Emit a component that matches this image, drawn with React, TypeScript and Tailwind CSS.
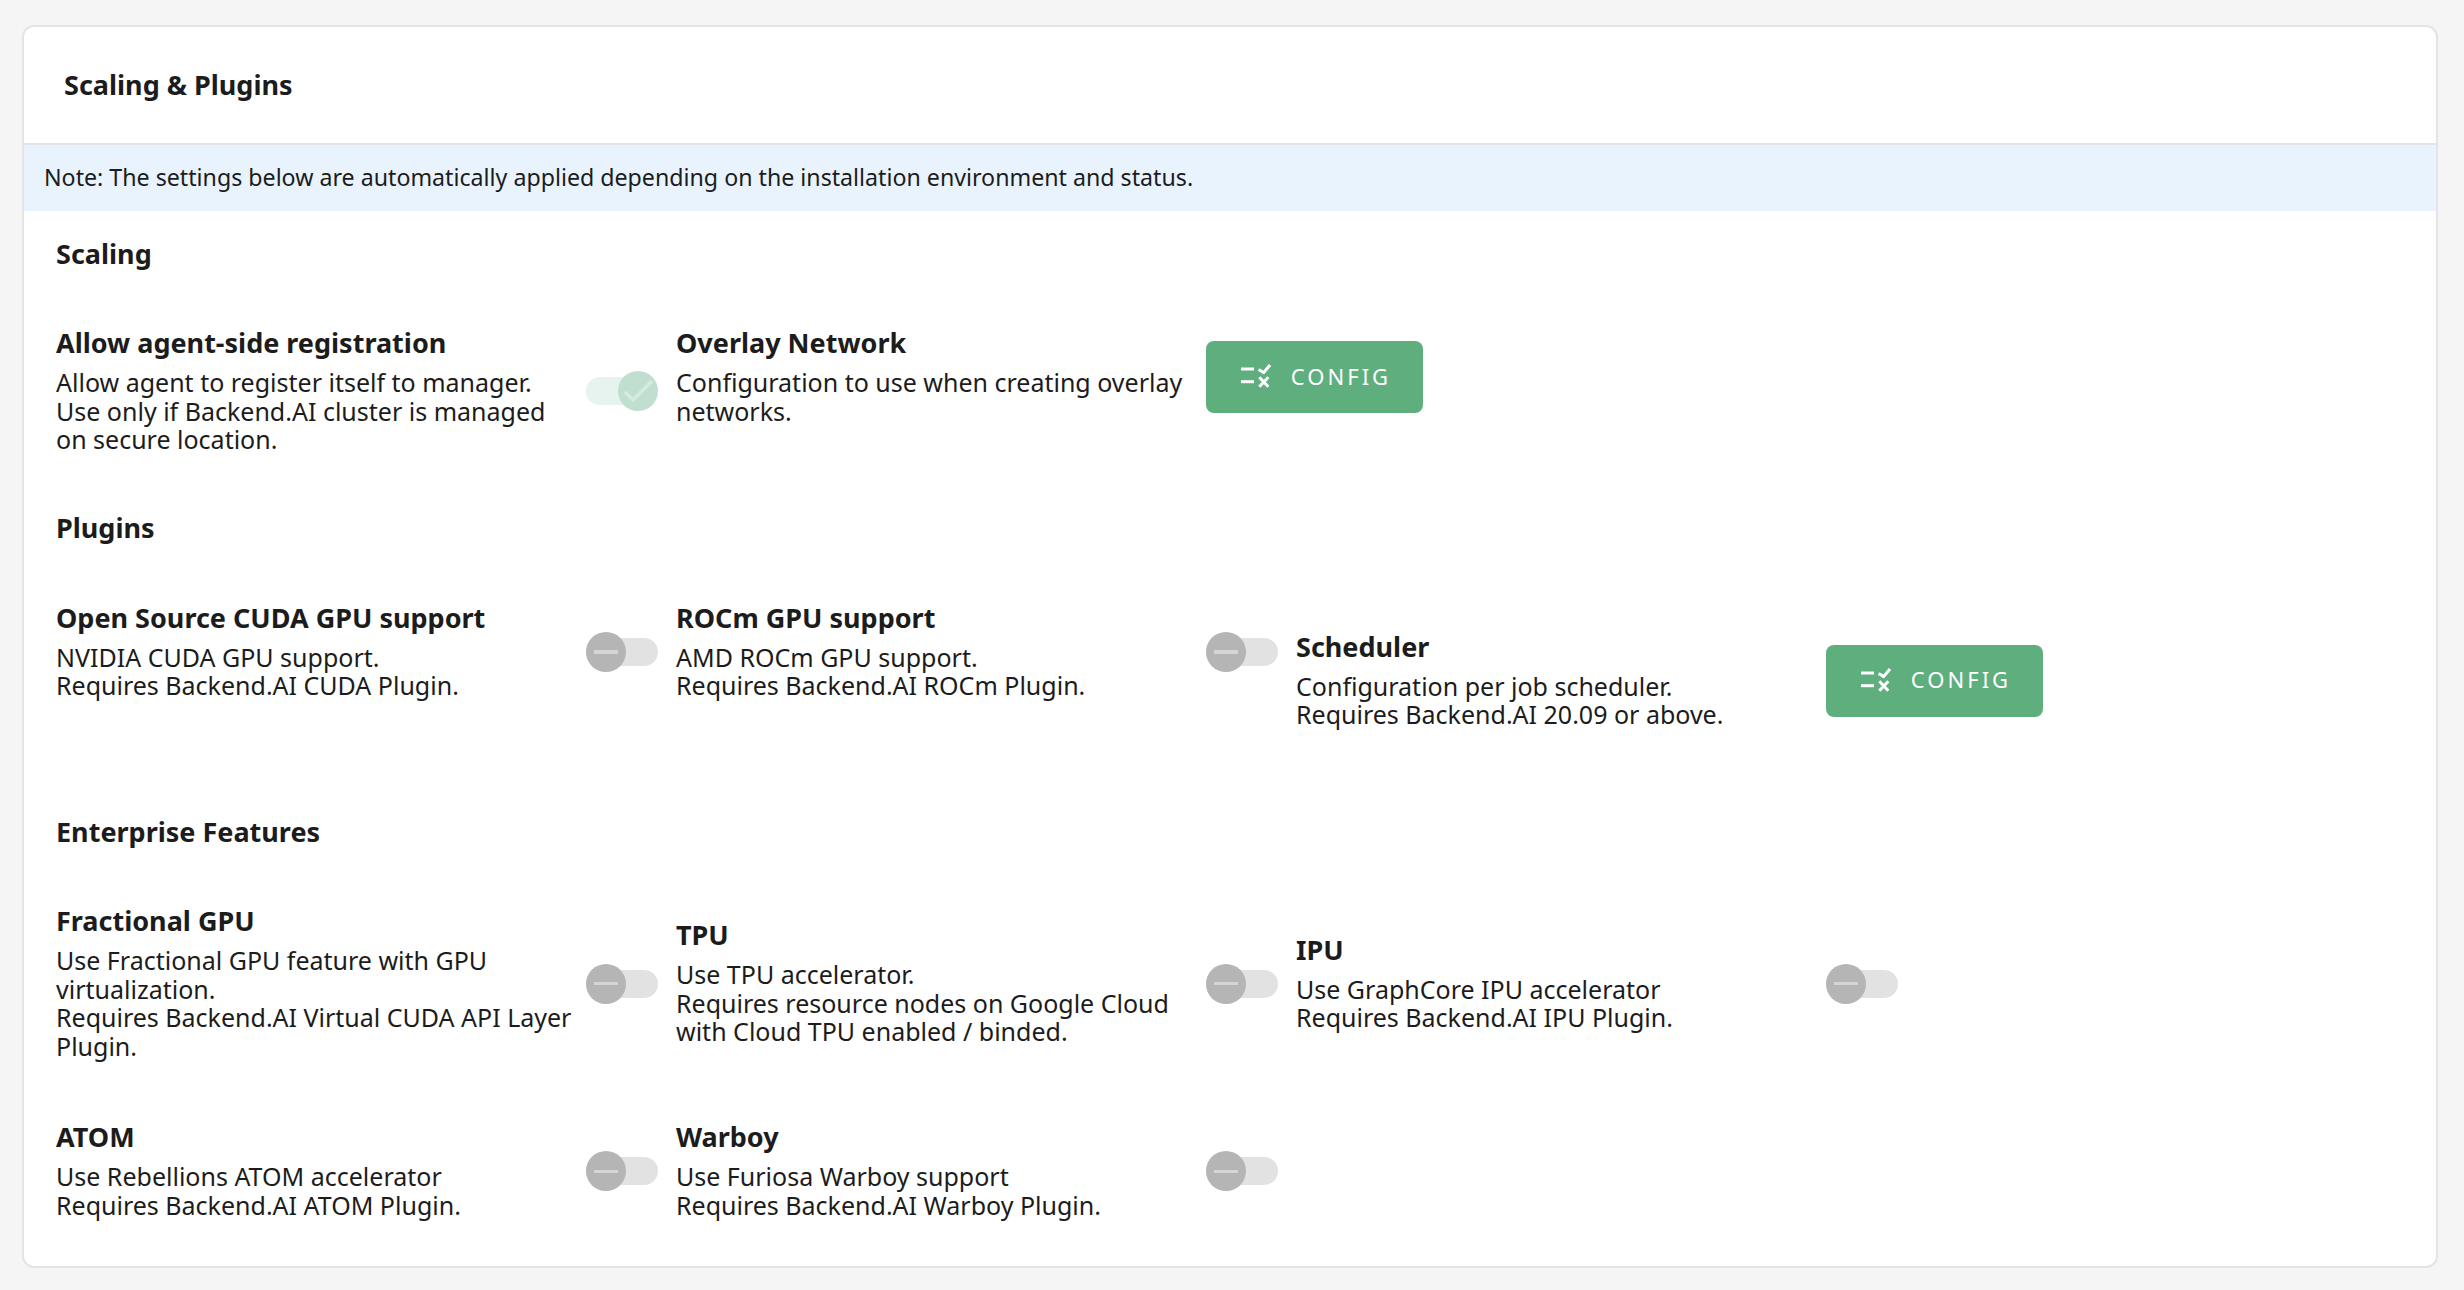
import React from "react"

type Feature = {
  title: string
  lines: string[]
  control: "on" | "off" | "config"
  offset?: string
}

const SCALING: Feature[] = [
  {
    title: "Allow agent-side registration",
    lines: ["Allow agent to register itself to manager.", "Use only if Backend.AI cluster is managed", "on secure location."],
    control: "on",
  },
  {
    title: "Overlay Network",
    lines: ["Configuration to use when creating overlay", "networks."],
    control: "config",
  },
]

const PLUGINS: Feature[] = [
  {
    title: "Open Source CUDA GPU support",
    lines: ["NVIDIA CUDA GPU support.", "Requires Backend.AI CUDA Plugin."],
    control: "off",
  },
  {
    title: "ROCm GPU support",
    lines: ["AMD ROCm GPU support.", "Requires Backend.AI ROCm Plugin."],
    control: "off",
  },
  {
    title: "Scheduler",
    lines: ["Configuration per job scheduler.", "Requires Backend.AI 20.09 or above."],
    control: "config",
    offset: "mt-[29px]",
  },
]

const ENTERPRISE: Feature[] = [
  {
    title: "Fractional GPU",
    lines: ["Use Fractional GPU feature with GPU", "virtualization.", "Requires Backend.AI Virtual CUDA API Layer", "Plugin."],
    control: "off",
  },
  {
    title: "TPU",
    lines: ["Use TPU accelerator.", "Requires resource nodes on Google Cloud", "with Cloud TPU enabled / binded."],
    control: "off",
  },
  {
    title: "IPU",
    lines: ["Use GraphCore IPU accelerator", "Requires Backend.AI IPU Plugin."],
    control: "off",
  },
  {
    title: "ATOM",
    lines: ["Use Rebellions ATOM accelerator", "Requires Backend.AI ATOM Plugin."],
    control: "off",
  },
  {
    title: "Warboy",
    lines: ["Use Furiosa Warboy support", "Requires Backend.AI Warboy Plugin."],
    control: "off",
  },
]

function ConfigIcon() {
  return (
    <svg width="30" height="24" viewBox="0 0 30 24" fill="none" stroke="white" strokeWidth="3">
      <path d="M0 5H13" />
      <path d="M0 17.7H13" />
      <path d="M17.6 5.4L22.6 8.6L29 1" />
      <path d="M18.3 13.3L27.3 22.7M27.3 13.3L18.3 22.7" />
    </svg>
  )
}

function ConfigButton() {
  return (
    <button className="mt-[4px] flex h-[72px] w-[217px] shrink-0 items-center justify-center gap-[20px] rounded-[8px] bg-[#5eae7e] pb-[2px] pl-[3px] text-[22px] tracking-[3px] text-white">
      <ConfigIcon />
      <span>CONFIG</span>
    </button>
  )
}

function Toggle({ checked }: { checked: boolean }) {
  return (
    <div className={`relative mt-[4px] h-[28px] w-[72px] shrink-0 rounded-full ${checked ? "bg-[#e7f3ee]" : "bg-[#e2e2e2]"}`}>
      {checked ? (
        <div className="absolute right-0 top-[-6px] h-[40px] w-[40px] rounded-full bg-[#c0dfcf]">
          <svg width="40" height="40" viewBox="0 0 40 40" fill="none" stroke="#d6ebe0" strokeWidth="3.6">
            <path d="M7 21L15 29L34 10" />
          </svg>
        </div>
      ) : (
        <div className="absolute left-0 top-[-6px] flex h-[40px] w-[40px] items-center justify-center rounded-full bg-[#b5b5b5]">
          <div className="h-[3.5px] w-[24px] bg-[#d5d5d5]" />
        </div>
      )}
    </div>
  )
}

function FeatureItem({ feature }: { feature: Feature }) {
  return (
    <div className={`flex items-center ${feature.offset ?? ""}`}>
      <div className="w-[530px] shrink-0">
        <h3 className="text-[27px] font-bold leading-[36px] text-[#1c1c1c]">{feature.title}</h3>
        <div className="mt-[7px] text-[25px] leading-[28.6px] text-[#1c1c1c]">
          {feature.lines.map((line) => (
            <div key={line} className="whitespace-nowrap">{line}</div>
          ))}
        </div>
      </div>
      {feature.control === "config" ? <ConfigButton /> : <Toggle checked={feature.control === "on"} />}
    </div>
  )
}

function SectionTitle({ children }: { children: React.ReactNode }) {
  return <h2 className="text-[27px] font-bold leading-[36px] text-[#1c1c1c]">{children}</h2>
}

export default function App() {
  return (
    <div className="min-h-screen bg-[#f5f5f5] px-[22px] pt-[25px] font-['Noto_Sans',sans-serif]">
      <div className="h-[1243px] w-[2416px] overflow-hidden rounded-[12px] border-2 border-[#e3e3e8] bg-white">
        <div className="flex h-[118px] items-center border-b-2 border-[#e3e3e8] pl-[40px] text-[27px] font-bold text-[#1c1c1c]">
          Scaling &amp; Plugins
        </div>
        <div className="flex h-[66px] items-center bg-[#e8f3fe] pb-[1px] pl-[20px] text-[23.2px] text-[#1c1c1c]">
          Note: The settings below are automatically applied depending on the installation environment and status.
        </div>

        <div className="pl-[32px] pt-[25px]">
          <SectionTitle>Scaling</SectionTitle>
          <div className="mt-[53px] grid grid-cols-[620px_620px_620px] items-start">
            {SCALING.map((f) => (
              <FeatureItem key={f.title} feature={f} />
            ))}
          </div>

          <div className="mt-[56px]">
            <SectionTitle>Plugins</SectionTitle>
          </div>
          <div className="mt-[54px] grid grid-cols-[620px_620px_620px] items-start">
            {PLUGINS.map((f) => (
              <FeatureItem key={f.title} feature={f} />
            ))}
          </div>

          <div className="mt-[85px]">
            <SectionTitle>Enterprise Features</SectionTitle>
          </div>
          <div className="mt-[53px] grid grid-cols-[620px_620px_620px] items-center gap-y-[59px]">
            {ENTERPRISE.map((f) => (
              <FeatureItem key={f.title} feature={f} />
            ))}
          </div>
        </div>
      </div>
    </div>
  )
}
